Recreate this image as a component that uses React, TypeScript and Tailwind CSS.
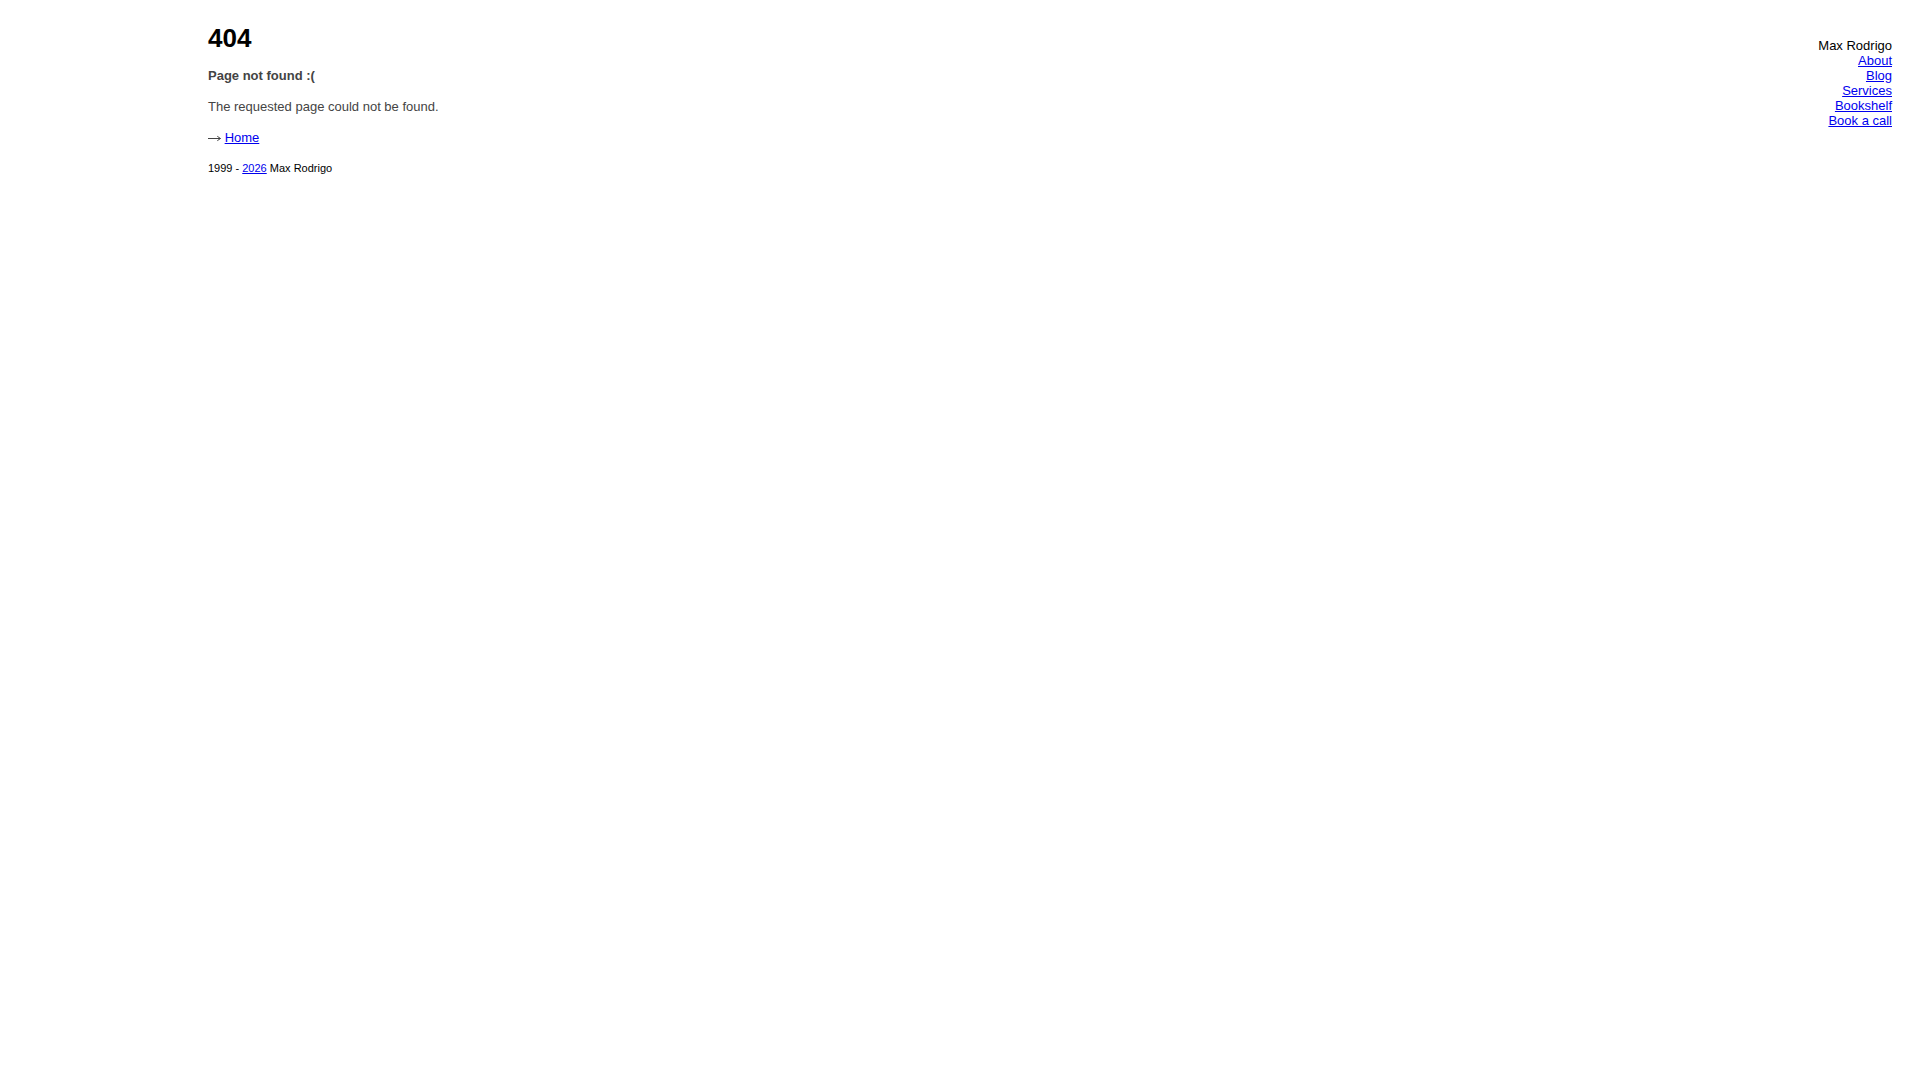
export default function App() {
  return (
    <div className="min-h-screen bg-white font-['Liberation_Sans',Arial,sans-serif] text-black">
      <div className="flex justify-between">
        <main className="pl-[208px] pt-[23px]">
          <h1 className="text-[26px] leading-[30px] font-bold">404</h1>
          <h2 className="mt-[15px] text-[13px] leading-[15px] font-bold text-[#444]">Page not found :(</h2>
          <p className="mt-[16px] text-[13px] leading-[15px] text-[#444]">The requested page could not be found.</p>
          <p className="mt-[16px] text-[13px] leading-[15px] text-[#444]">
            <svg width="13" height="7" viewBox="0 0 13 7" className="inline-block align-baseline" aria-label="→">
              <path d="M0 3.5H12.3M9.3 1.3L12.5 3.5L9.3 5.7" fill="none" stroke="#444" strokeWidth="1" />
            </svg>{' '}
            <a href="#" className="text-[#0000ee] underline">Home</a>
          </p>
          <footer className="mt-[17px] text-[11px] leading-[13px]">
            1999 - <a href="#" className="text-[#0000ee] underline">2026</a> Max Rodrigo
          </footer>
        </main>
        <nav className="pr-[28px] pt-[38px] flex flex-col items-end text-[13px] leading-[15px]">
          <span>Max Rodrigo</span>
          <a href="#" className="text-[#0000ee] underline">About</a>
          <a href="#" className="text-[#0000ee] underline">Blog</a>
          <a href="#" className="text-[#0000ee] underline">Services</a>
          <a href="#" className="text-[#0000ee] underline">Bookshelf</a>
          <a href="#" className="text-[#0000ee] underline">Book a call</a>
        </nav>
      </div>
    </div>
  );
}
